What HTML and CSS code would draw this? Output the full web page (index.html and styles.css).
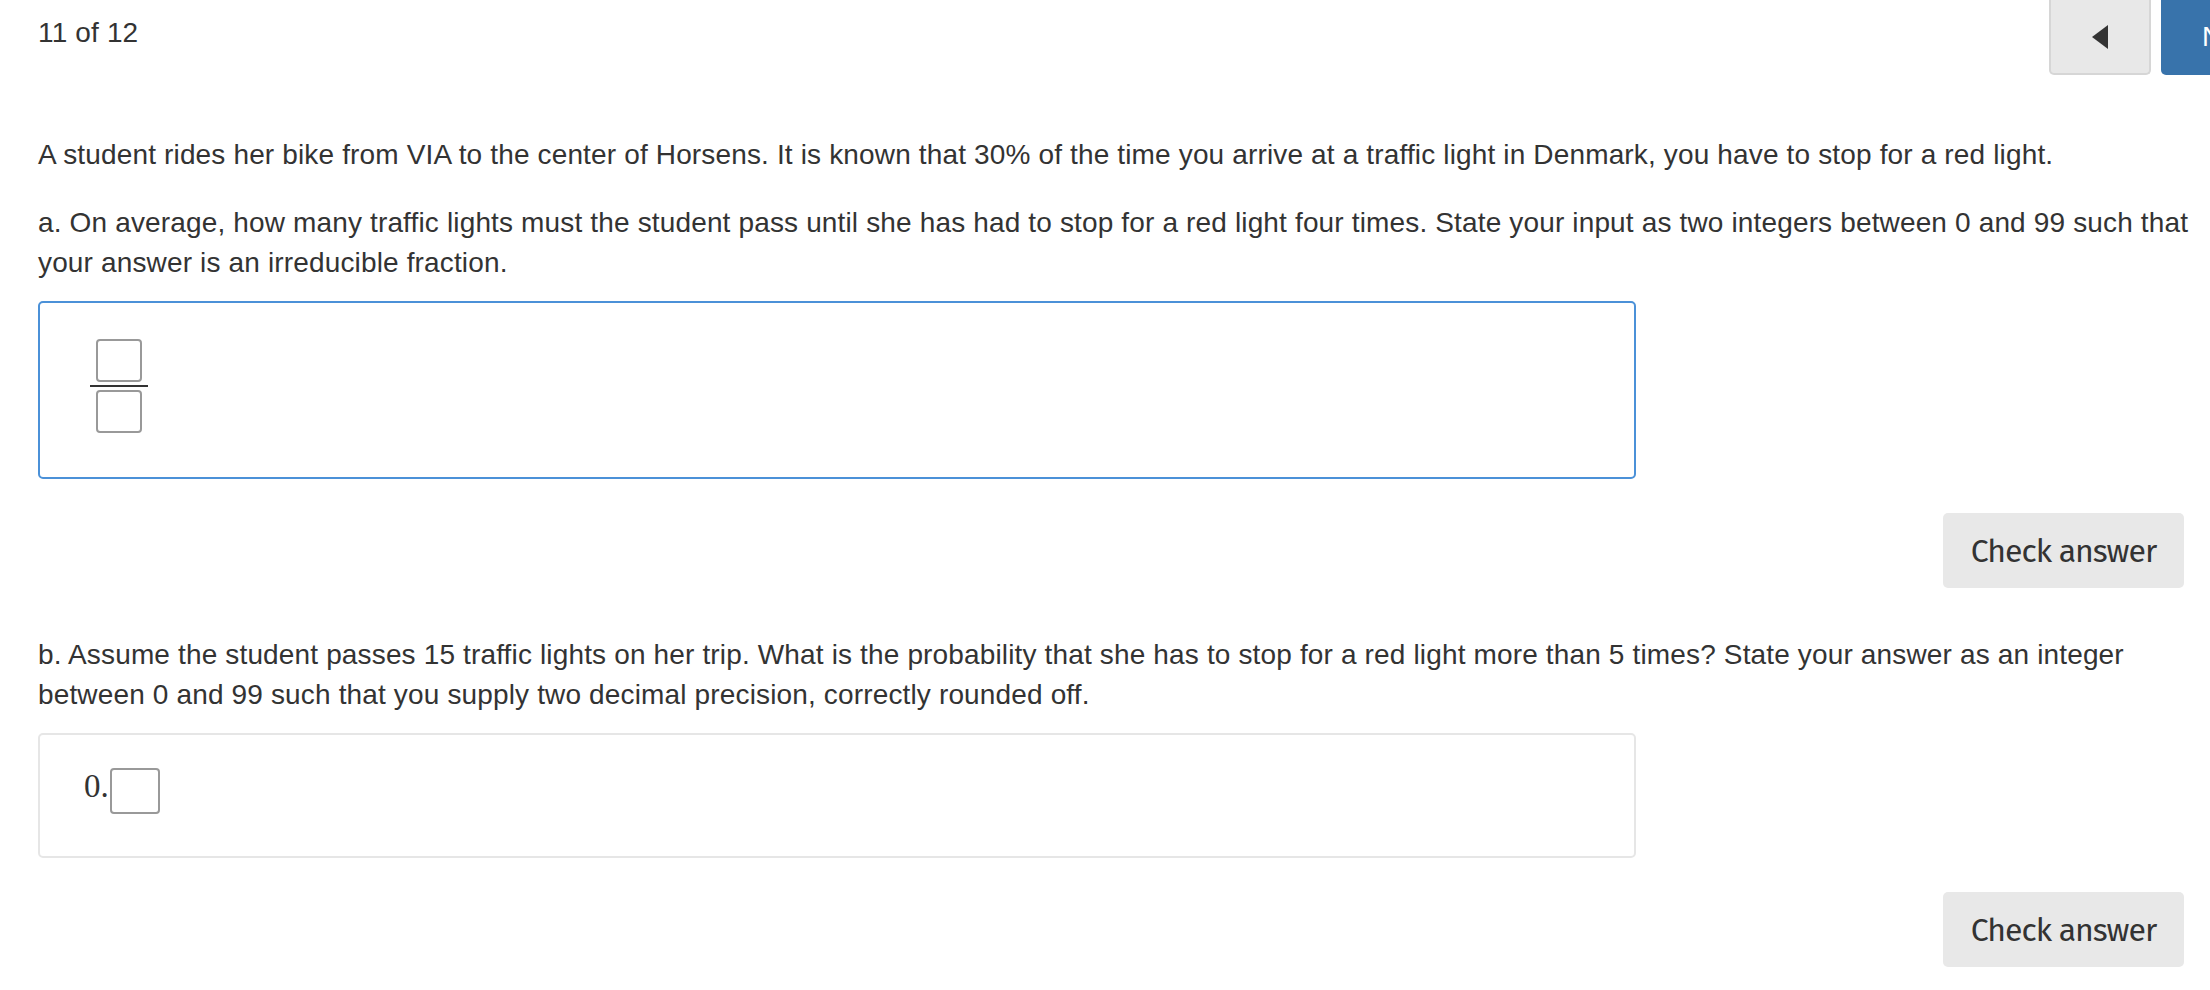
FILE: index.html
```html
<!DOCTYPE html>
<html lang="en">
<head>
<meta charset="utf-8">
<title>Question 11 of 12</title>
<link rel="stylesheet" href="styles.css">
</head>
<body>
<div class="page">
  <header class="topbar">
    <div class="counter">11 of 12</div>
    <nav class="pager">
      <button class="pager-btn prev" aria-label="Previous">
        <svg width="16" height="24" viewBox="0 0 16 24"><polygon points="0,12 16,0 16,24" fill="#333"/></svg>
      </button>
      <button class="pager-btn next">Next</button>
    </nav>
  </header>

  <p class="intro">A student rides her bike from VIA to the center of Horsens. It is known that 30% of the time you arrive at a traffic light in Denmark, you have to stop for a red light.</p>

  <p class="question">a. On average, how many traffic lights must the student pass until she has had to stop for a red light four times. State your input as two integers between 0 and 99 such that your answer is an irreducible fraction.</p>

  <div class="answer-box active tall">
    <div class="frac">
      <span class="slot"></span>
      <span class="bar"></span>
      <span class="slot"></span>
    </div>
  </div>

  <div class="actions"><button class="check">Check answer</button></div>

  <p class="question second">b. Assume the student passes 15 traffic lights on her trip. What is the probability that she has to stop for a red light more than 5 times? State your answer as an integer between 0 and 99 such that you supply two decimal precision, correctly rounded off.</p>

  <div class="answer-box short">
    <div class="decimal">
      <span class="math">0.</span><span class="slot wide"></span>
    </div>
  </div>

  <div class="actions"><button class="check">Check answer</button></div>
</div>
</body>
</html>
```

FILE: styles.css
```css
* { box-sizing: border-box; }

html, body {
  margin: 0;
  padding: 0;
  background: #fff;
  overflow: hidden;
}

body {
  font-family: "Liberation Sans", Arial, Helvetica, sans-serif;
  font-size: 28px;
  line-height: 40px;
  letter-spacing: 0.15px;
  color: #333;
}

.page {
  padding: 0 18px 0 38px;
}

.topbar {
  display: flex;
  justify-content: space-between;
  align-items: flex-start;
  height: 75px;
}

.counter {
  padding-top: 13px;
}

.pager {
  display: flex;
  gap: 10px;
  margin-right: -71px;
}

.pager-btn {
  height: 75px;
  border: 2px solid transparent;
  border-top: none;
  border-radius: 0 0 5px 5px;
  font-family: "Liberation Sans", Arial, sans-serif;
  font-size: 28px;
  padding: 0;
  display: flex;
  align-items: center;
  justify-content: center;
}

.pager-btn.prev {
  width: 102px;
  background: #e8e8e8;
  border-color: #d6d6d6;
}

.pager-btn.next {
  width: 102px;
  background: #3873ab;
  border-color: #3873ab;
  color: #fff;
  justify-content: flex-start;
  padding-left: 39px;
}

.intro {
  margin: 60px 0 0;
}

.question {
  margin: 28px 0 18px;
}

.question.second {
  margin-top: 47px;
}

.answer-box {
  border: 2px solid #e6e6e6;
  border-radius: 5px;
  width: 1598px;
}

.answer-box.active {
  border-color: #4b91d8;
}

.answer-box.tall {
  height: 178px;
  padding: 36px 0 0 50px;
}

.answer-box.short {
  height: 125px;
  padding: 33px 0 0 44px;
}

.frac {
  display: flex;
  flex-direction: column;
  align-items: center;
  width: 58px;
}

.bar {
  display: block;
  width: 58px;
  height: 2px;
  background: #333;
  margin: 3px 0;
}

.slot {
  display: block;
  width: 46px;
  height: 43px;
  border: 2px solid #999;
  border-radius: 4px;
  background: #fff;
}

.decimal {
  display: flex;
  align-items: flex-end;
}

.math {
  font-family: "Liberation Serif", "Times New Roman", serif;
  font-size: 33px;
  line-height: 33px;
  letter-spacing: 0;
  margin-bottom: 11px;
}

.slot.wide {
  width: 50px;
  height: 46px;
  margin-left: 1px;
}

.actions {
  display: flex;
  justify-content: flex-end;
  margin-top: 34px;
  padding-right: 8px;
}

.check {
  width: 241px;
  height: 75px;
  border: none;
  border-radius: 5px;
  background: #e8e8e8;
  color: #333;
  font-family: "Fira Sans", Roboto, "Open Sans", sans-serif;
  font-size: 32px;
  letter-spacing: -1px;
  padding: 0;
}
```
